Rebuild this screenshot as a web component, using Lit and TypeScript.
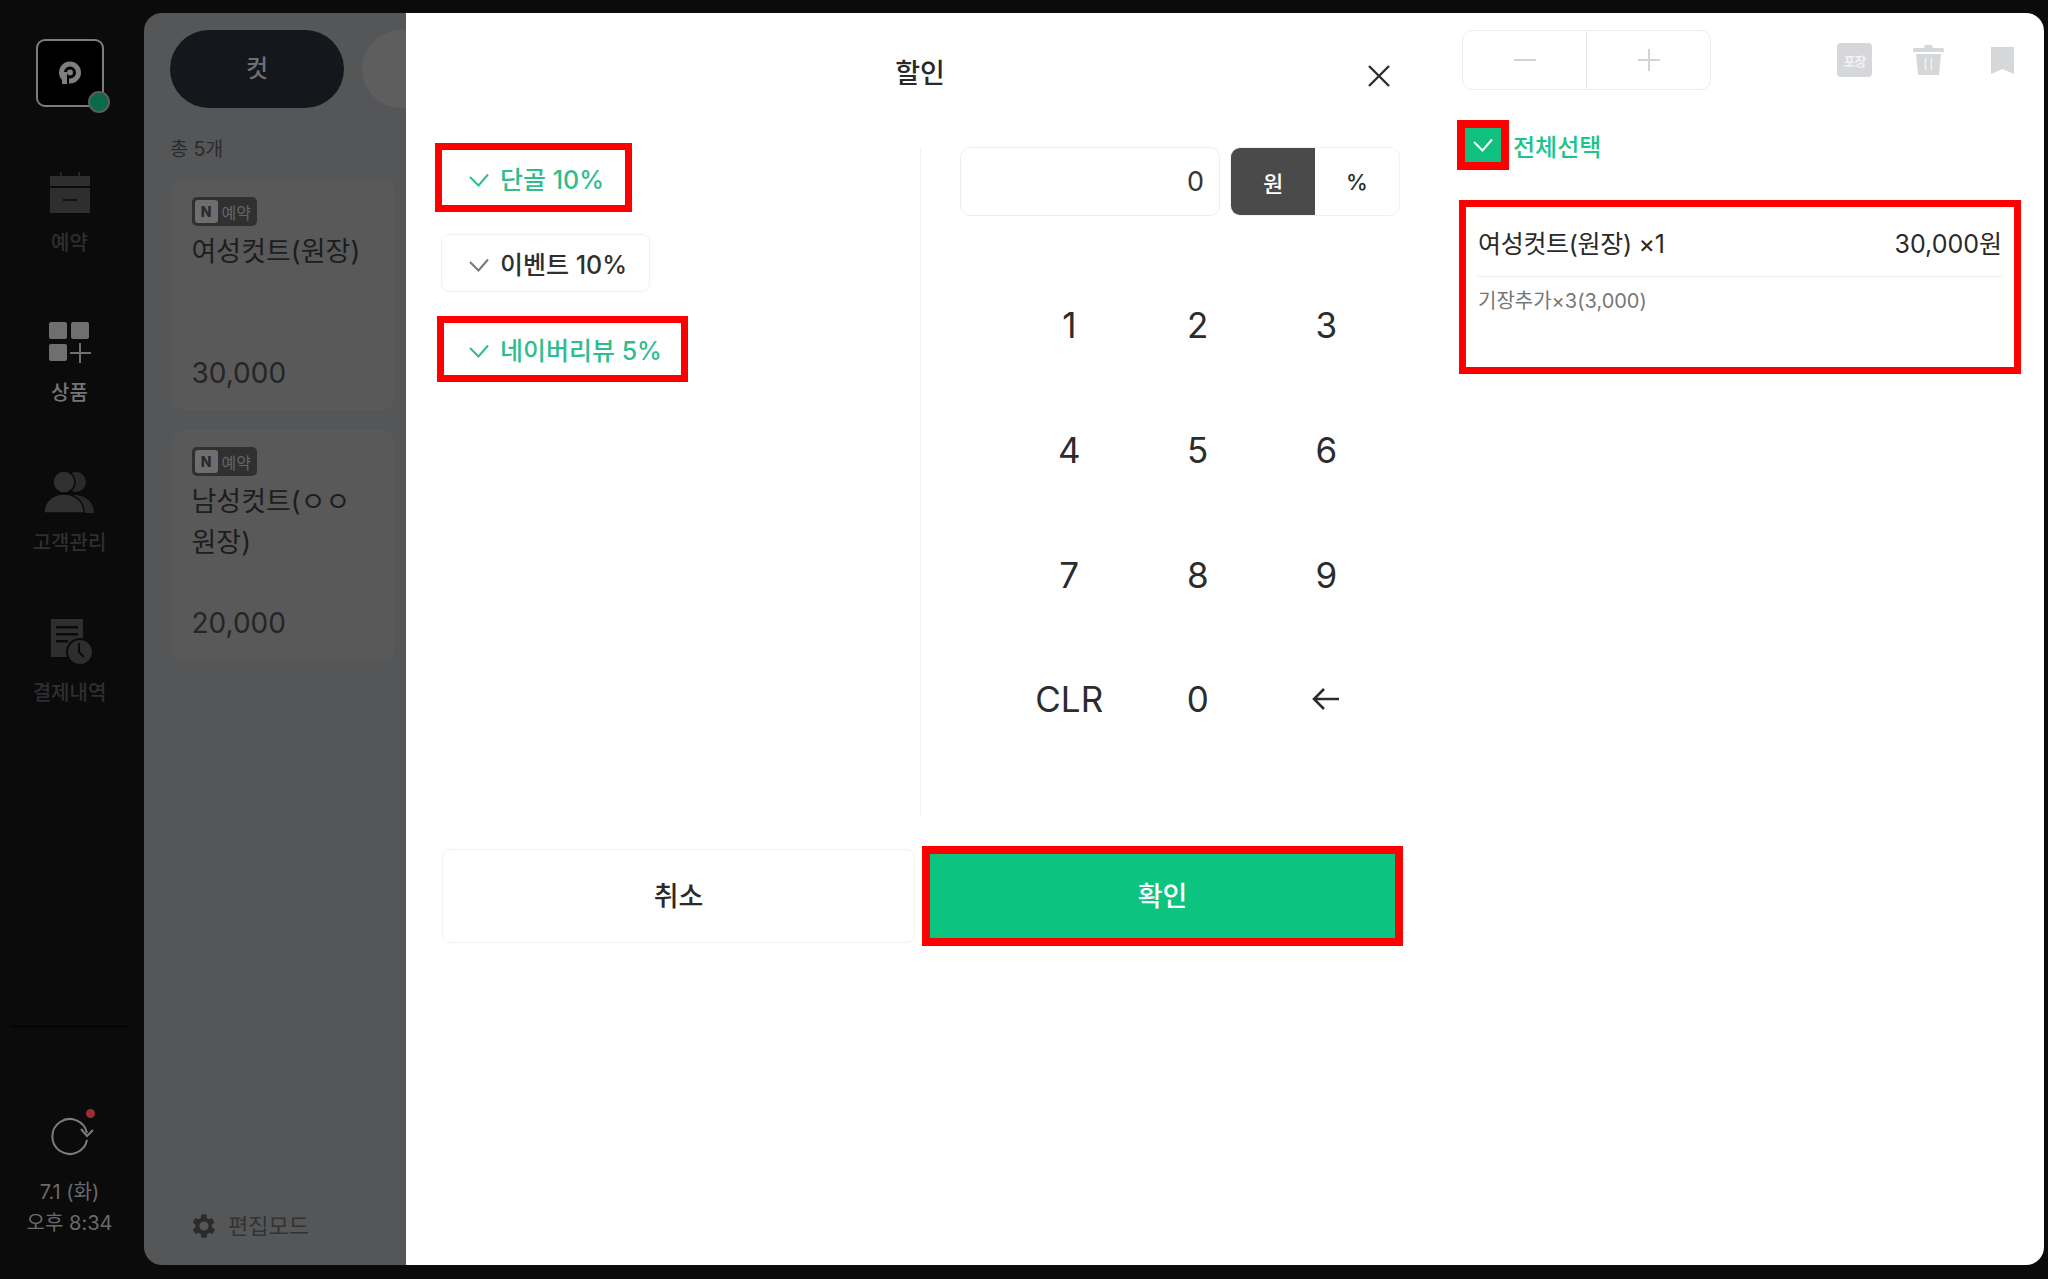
import { LitElement, html, css, svg } from "lit";
import { customElement } from "lit/decorators.js";

const check = (c: string, w = 20) => html`<svg width=${w} height=${Math.round(w * 0.7)} viewBox="0 0 20 14" fill="none" stroke=${c} stroke-width="2"><path d="M1 4l8.500 8.500L19 1.500"/></svg>`;

const navIcons: Record<string, unknown> = {
  cal: svg`<svg width="40" height="41" viewBox="0 0 40 41"><path fill="#2e2e2f" d="M0 4h10V0h1.500v4h17V0H30v4h10v10H0zM0 16h40v25H0z"/><rect x="13" y="27" width="14" height="2" fill="#111112"/></svg>`,
  prod: svg`<svg width="42" height="41" viewBox="0 0 42 41"><g fill="#6f6f70"><rect width="18" height="17" rx="2"/><rect x="22" width="18" height="17" rx="2"/><rect y="22" width="18" height="17" rx="2"/><rect x="30" y="21" width="2" height="20"/><rect x="21" y="30" width="21" height="2"/></g></svg>`,
  cust: svg`<svg width="50" height="42" viewBox="0 0 50 42"><g fill="#2a2a2b"><circle cx="32" cy="11" r="10"/><path d="M30 24c10 0 20 6 20 18H34z"/></g><g fill="#303031" stroke="#0b0b0c" stroke-width="1.5"><circle cx="20" cy="11" r="11"/><path d="M0 42c0-12 9-19 20-19s20 7 20 19z"/></g></svg>`,
  hist: svg`<svg width="42" height="46" viewBox="0 0 42 46" style="margin-left:6px"><path fill="#2e2e2f" d="M0 0h32v38H0z"/><g fill="#0b0b0c"><rect x="5" y="7" width="22" height="2.500"/><rect x="5" y="14" width="22" height="2.500"/><rect x="5" y="21" width="12" height="2.500"/></g><circle cx="29" cy="33" r="13" fill="#2e2e2f" stroke="#0b0b0c" stroke-width="2"/><path d="M28 24v9l5 5" stroke="#0b0b0c" stroke-width="2" fill="none"/></svg>`,
};

@customElement("app-root")
export class AppRoot extends LitElement {
  static styles = css`
    :host { display: block; width: 2048px; height: 1279px; background: #0b0b0c; overflow: hidden;
      font-family: Inter, "Noto Sans CJK KR", sans-serif; color: #2a2a2a; }
    * { box-sizing: border-box; }
    .app { display: flex; height: 1279px; }
    .side { width: 144px; flex: none; display: flex; flex-direction: column; align-items: center; padding: 39px 5px 0 0; color: #2f2f30; }
    .logo { width: 68px; height: 68px; border: 2px solid #7d7d7d; border-radius: 9px; background: #000; position: relative; display: flex; align-items: center; justify-content: center; margin-bottom: 64px; }
    .dot { position: absolute; right: -8px; bottom: -8px; width: 22px; height: 22px; border-radius: 50%; background: #0a6a49; border: 2px solid #5c5c5c; }
    .nav { display: flex; flex-direction: column; align-items: center; height: 150px; font-size: 20px; font-weight: 500; line-height: 24px; gap: 18px; }
    .nav svg { display: block; }
    .nav.on { color: #757576; }
    .nav .ic { height: 42px; display: flex; align-items: center; }
    .side-foot { margin-top: auto; width: 100%; display: flex; flex-direction: column; align-items: center; padding-bottom: 40px; color: #6a6a6b; font-size: 20px; line-height: 31px; }
    .rule { width: 118px; height: 1px; background: #000; margin-bottom: 89px; }
    .sync { position: relative; height: 40px; margin: 0 0 21px 4px; }
    .sync svg { display: block; }
    .sync i { position: absolute; width: 9px; height: 9px; border-radius: 50%; background: #9d2d32; right: -1px; top: -7px; }
    .panel { flex: 1; min-width: 0; margin: 13px 4px 14px 0; border-radius: 18px; overflow: hidden; display: flex; }
    .menu { width: 262px; flex: none; background: #555657; padding: 17px 0 0 26px; display: flex; flex-direction: column; color: #1d1d1e; overflow: hidden; }
    .tabs { display: flex; gap: 18px; }
    .pill { width: 174px; height: 78px; flex: none; border-radius: 39px; background: #16171c; color: #6f6f70; font-size: 24px; font-weight: 500; display: flex; align-items: center; justify-content: center; padding-bottom: 6px; }
    .pill.off { background: #5e5e5f; }
    .count { font-size: 19.500px; line-height: 24px; margin-top: 29px; color: #2b2b2c; }
    .card { width: 223px; height: 230px; margin: 20px 0 0 2px; background: #59595a; border-radius: 12px; padding: 17px 20px 0 19.500px; display: flex; flex-direction: column; }
    .count + .card { margin-top: 19px; }
    .badge { width: 65px; height: 29px; background: #303031; border-radius: 5px; padding: 3px; display: flex; align-items: center; gap: 4px; flex: none; color: #656566; font-size: 16px; }
    .badge b { width: 23px; height: 23px; background: #6e6e6f; color: #2a2a2a; border-radius: 3px; display: flex; align-items: center; justify-content: center; font-size: 14px; font-weight: 800; }
    .name { font-size: 27px; line-height: 41px; margin-top: 5px; font-weight: 400; }
    .price { margin-top: auto; font-size: 28px; line-height: 34px; margin-bottom: 20px; color: #252526; }
    .edit { display: flex; align-items: center; gap: 11px; margin: auto 0 25px 21px; font-size: 22px; line-height: 28px; color: #333334; }
    .sheet { flex: 1; min-width: 0; background: #fff; display: flex; }
    .dialog { width: 1028px; flex: none; display: flex; flex-direction: column; }
    .head { height: 130px; display: grid; grid-template-columns: 1fr auto 1fr; align-items: start; padding-top: 40px; font-size: 27px; font-weight: 500; line-height: 42px; }
    .close { justify-self: end; margin-right: 44px; margin-top: 12px; display: block; }
    .body { display: flex; height: 703px; }
    .discounts { width: 514px; padding-left: 29px; display: flex; flex-direction: column; align-items: flex-start; }
    .chip { display: flex; align-items: center; gap: 11px; font-size: 25px; font-weight: 500; color: #2fbd8d; background: #fff; height: 69px; padding-left: 27px; }
    .chip svg { margin-top: 4px; }
    .chip.a { width: 197px; border: 7px solid #f00; }
    .chip.b { width: 209px; height: 58px; margin: 22px 0 24px 6px; border: 1px solid #f1f1f1; border-radius: 8px; padding-left: 27px; color: #303030; }
    .chip.c { width: 251px; height: 66px; margin-left: 2px; border: 7px solid #f00; padding-left: 25px; }
    .pad { flex: 1; margin-top: 4px; height: 668px; border-left: 1px solid #f3f3f3; padding-left: 39px; }
    .top { display: flex; gap: 10px; width: 440px; height: 69px; }
    .field { width: 260px; border: 1px solid #eee; border-radius: 10px; display: flex; align-items: center; justify-content: flex-end; padding-right: 15px; font-size: 27px; color: #333; }
    .seg { width: 170px; border: 1px solid #f1f1f1; border-radius: 10px; display: flex; overflow: hidden; font-size: 22px; font-weight: 500; }
    .seg span { flex: 1; display: flex; align-items: center; justify-content: center; }
    .seg .sel { flex: none; width: 84px; background: #4a4a4a; color: #fff; }
    .keys { display: grid; grid-template-columns: repeat(3, 128.5px); grid-auto-rows: 124.7px; margin: 47px 0 0 45px; }
    .keys span { display: flex; align-items: center; justify-content: center; font-size: 35px; color: #2c2c2c; }
    .actions { display: flex; align-items: center; padding-left: 36px; height: 100px; }
    .btn { display: flex; align-items: center; justify-content: center; font-size: 27px; font-weight: 500; padding-bottom: 3px; }
    .cancel { width: 473px; height: 94px; border: 1px solid #f2f2f2; border-radius: 8px; }
    .ok { width: 481px; height: 100px; margin-left: 7px; background: #0cc47f; color: #fff; border: 8px solid #f00; }
    .cart { flex: 1; min-width: 0; padding: 17px 0 0 28px; }
    .tools { display: flex; align-items: center; height: 60px; margin-right: 30px; }
    .step { width: 249px; height: 60px; border: 1px solid #ececec; border-radius: 10px; display: flex; }
    .step span { flex: 1; display: flex; align-items: center; justify-content: center; }
    .step span + span { border-left: 1px solid #e8e8e8; }
    .wrap { margin-left: auto; width: 35px; height: 34px; background: #d6d7d9; border-radius: 4px; color: #f2f2f3; font-size: 13px; font-weight: 700; letter-spacing: -1px; display: flex; align-items: center; justify-content: center; margin-right: 41px; }
    .all { display: flex; align-items: center; margin: 30px 0 0 -5px; gap: 4px; font-size: 24px; font-weight: 500; color: #1cc48a; }
    .box { width: 52px; height: 50px; border: 8px solid #f00; background: #11c07f; display: flex; align-items: center; justify-content: center; }
    .item { width: 562px; height: 174px; margin: 30px 0 0 -3px; border: 7px solid #f00; padding: 0 12px; }
    .row { display: flex; justify-content: space-between; align-items: center; height: 70px; border-bottom: 1px solid #eee; font-size: 25px; color: #2a2a2a; }
    .row span:first-child { letter-spacing: -0.3px; }
    .opt { font-size: 20px; color: #777; margin-top: 11px; line-height: 26px; }
  `;

  private sidebar() {
    const navs = [["cal", "예약", ""], ["prod", "상품", "on"], ["cust", "고객관리", ""], ["hist", "결제내역", ""]];
    return html`<aside class="side">
      <div class="logo">
        <svg width="24" height="24" viewBox="0 0 24 24"><circle cx="12" cy="11.500" r="8.500" fill="none" stroke="#7f7f7f" stroke-width="5"/><circle cx="12" cy="11.500" r="3" fill="#7f7f7f"/><rect x="4" y="11" width="5" height="12" fill="#7f7f7f"/><rect x="9" y="17" width="2" height="7" fill="#000"/></svg>
        <span class="dot"></span>
      </div>
      ${navs.map(([k, t, c]) => html`<div class="nav ${c}"><div class="ic">${navIcons[k]}</div><span>${t}</span></div>`)}
      <div class="side-foot">
        <div class="rule"></div>
        <div class="sync">
          <svg width="44" height="40" viewBox="0 0 44 40" fill="none" stroke="#7d7d7e" stroke-width="2"><path d="M37 24A17.500 17.500 0 1 1 37 17"/><path d="M31 13l6 7 6-6"/></svg>
          <i></i>
        </div>
        <div>7.1 (화)</div>
        <div>오후 8:34</div>
      </div>
    </aside>`;
  }

  private menu() {
    const badge = html`<div class="badge"><b>N</b>예약</div>`;
    return html`<section class="menu">
      <div class="tabs"><div class="pill">컷</div><div class="pill off"></div></div>
      <div class="count">총 5개</div>
      <div class="card">${badge}<div class="name">여성컷트(원장)</div><div class="price">30,000</div></div>
      <div class="card">${badge}<div class="name">남성컷트(ㅇㅇ 원장)</div><div class="price">20,000</div></div>
      <div class="edit">
        <svg width="26" height="26" viewBox="2 2 20 20" fill="#2b2b2c"><path d="M19.400 13c.1-.3.1-.7.1-1s0-.7-.1-1l2.100-1.600-2-3.500-2.500 1c-.5-.4-1.100-.7-1.700-1L15.400 3h-4l-.4 2.900c-.6.2-1.200.6-1.700 1l-2.500-1-2 3.500L6.900 11c-.1.3-.1.7-.1 1s0 .7.1 1l-2.100 1.600 2 3.500 2.500-1c.5.4 1.100.7 1.700 1l.4 2.900h4l.4-2.900c.6-.2 1.200-.6 1.700-1l2.500 1 2-3.500zM13.400 15.500a3.500 3.500 0 110-7 3.500 3.500 0 010 7z" transform="translate(-1.400 0)"/></svg>
        편집모드
      </div>
    </section>`;
  }

  private dialog() {
    const keys = ["1", "2", "3", "4", "5", "6", "7", "8", "9", "CLR", "0"];
    return html`<section class="dialog">
      <header class="head"><span></span><span>할인</span>
        <svg class="close" width="22" height="22" viewBox="0 0 22 22" stroke="#2e2e2e" stroke-width="2.400"><path d="M1 1l20 20M21 1L1 21"/></svg>
      </header>
      <div class="body">
        <div class="discounts">
          <div class="chip a">${check("#2fbd8d")}단골 10%</div>
          <div class="chip b">${check("#777")}이벤트 10%</div>
          <div class="chip c">${check("#2fbd8d")}네이버리뷰 5%</div>
        </div>
        <div class="pad">
          <div class="top">
            <div class="field">0</div>
            <div class="seg"><span class="sel">원</span><span>%</span></div>
          </div>
          <div class="keys">
            ${keys.map((k) => html`<span>${k}</span>`)}
            <span><svg width="28" height="24" viewBox="0 0 28 24" fill="none" stroke="#2c2c2c" stroke-width="2.600"><path d="M27 12H2M12 2L2 12l10 10"/></svg></span>
          </div>
        </div>
      </div>
      <div class="actions">
        <div class="btn cancel">취소</div>
        <div class="btn ok">확인</div>
      </div>
    </section>`;
  }

  private cart() {
    return html`<section class="cart">
      <div class="tools">
        <div class="step">
          <span><svg width="22" height="2"><rect width="22" height="2" fill="#d4d4d4"/></svg></span>
          <span><svg width="22" height="22"><path d="M0 10h22v2H0zM10 0h2v22h-2z" fill="#d4d4d4"/></svg></span>
        </div>
        <div class="wrap">포장</div>
        <svg width="31" height="30" viewBox="0 0 31 30" style="margin-right:47px"><path fill="#d6d7d9" d="M12 0h7l1 3h9a2 2 0 0 1 2 2v2H0V5a2 2 0 0 1 2-2h9zM3 9h25l-2 21H5z"/><path stroke="#f2f2f3" stroke-width="1.400" d="M12.500 13v12M18.500 13v12"/></svg>
        <svg width="23" height="27" viewBox="0 0 23 27"><path fill="#d6d7d9" d="M0 0h23v27l-11.500-5L0 27z"/></svg>
      </div>
      <div class="all"><div class="box">${check("#fff", 20)}</div>전체선택</div>
      <div class="item">
        <div class="row"><span>여성컷트(원장) ×1</span><span>30,000원</span></div>
        <div class="opt">기장추가×3(3,000)</div>
      </div>
    </section>`;
  }

  render() {
    return html`<div class="app">
      ${this.sidebar()}
      <main class="panel">
        ${this.menu()}
        <div class="sheet">${this.dialog()}${this.cart()}</div>
      </main>
    </div>`;
  }
}
